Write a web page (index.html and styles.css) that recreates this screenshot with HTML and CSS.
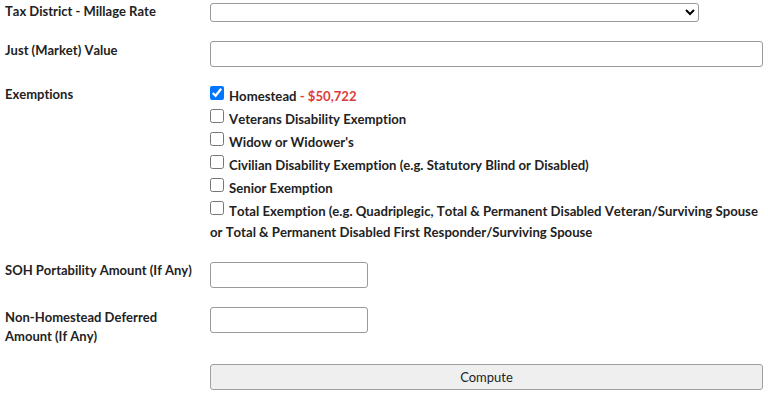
FILE: index.html
```html
<!DOCTYPE html>
<html lang="en">
<head>
<meta charset="utf-8">
<title>Tax Estimator</title>
<link rel="stylesheet" href="styles.css">
</head>
<body>
<form class="calc">
  <div class="row row-select">
    <label class="lbl" for="district">Tax District - Millage Rate</label>
    <div class="ctl"><select id="district" class="sel"><option></option></select></div>
  </div>
  <div class="row row-just">
    <label class="lbl" for="just">Just (Market) Value</label>
    <div class="ctl"><input id="just" class="txt full" type="text"></div>
  </div>
  <div class="row row-ex">
    <div class="lbl">Exemptions</div>
    <div class="ctl checks">
      <div class="chk"><input type="checkbox" checked><span>Homestead</span><span class="amt"> - $50,722</span></div>
      <div class="chk"><input type="checkbox"><span>Veterans Disability Exemption</span></div>
      <div class="chk"><input type="checkbox"><span>Widow or Widower's</span></div>
      <div class="chk"><input type="checkbox"><span>Civilian Disability Exemption (e.g. Statutory Blind or Disabled)</span></div>
      <div class="chk"><input type="checkbox"><span>Senior Exemption</span></div>
      <div class="chk"><input type="checkbox"><span>Total Exemption (e.g. Quadriplegic, Total &amp; Permanent Disabled Veteran/Surviving Spouse or Total &amp; Permanent Disabled First Responder/Surviving Spouse</span></div>
    </div>
  </div>
  <div class="row">
    <label class="lbl" for="soh">SOH Portability Amount (If Any)</label>
    <div class="ctl"><input id="soh" class="txt short" type="text"></div>
  </div>
  <div class="row row-two">
    <label class="lbl lbl-two" for="nhd">Non-Homestead Deferred Amount (If Any)</label>
    <div class="ctl"><input id="nhd" class="txt short" type="text"></div>
  </div>
  <div class="row row-btn">
    <div class="lbl"></div>
    <div class="ctl"><button type="button" class="btn">Compute</button></div>
  </div>
</form>
</body>
</html>
```

FILE: styles.css
```css
html, body {
  margin: 0;
  padding: 0;
  background: #ffffff;
}
body {
  font-family: Lato, "Noto Sans", sans-serif;
  font-size: 13px;
  color: #222222;
  font-variant-ligatures: none;
  font-kerning: none;
}
.calc {
  padding: 3px 5px 0 5px;
  display: flex;
  flex-direction: column;
  gap: 19px;
}
.row {
  display: grid;
  grid-template-columns: 205px 1fr;
  align-items: start;
}
.lbl {
  font-weight: 700;
  line-height: 16px;
  padding-top: 0;
}
.row-just .lbl { padding-top: 1px; }
.lbl-two {
  line-height: 19px;
  padding-top: 1px;
  width: 170px;
}
.ctl { min-width: 0; }
.sel {
  display: block;
  box-sizing: border-box;
  width: 489px;
  height: 19px;
  margin: 0;
  font-family: Lato, sans-serif;
  font-size: 13px;
  border: 1px solid #9a9a9a;
  border-radius: 3px;
  background: #fff;
}
.txt {
  display: block;
  box-sizing: border-box;
  height: 26px;
  margin: 0;
  border: 1px solid #9a9a9a;
  border-radius: 3px;
  background: #fff;
  font-family: Lato, sans-serif;
  font-size: 13px;
  padding: 2px 6px;
}
.full { width: 553px; }
.short { width: 158px; }
.checks {
  display: flex;
  flex-direction: column;
  gap: 2px;
  font-weight: 700;
  font-size: 13.15px;
  line-height: 21px;
}
.chk input {
  margin: 0 5px 0 0;
  width: 14px;
  height: 14px;
  vertical-align: 1px;
}
.amt { color: #e03c3c; }
.row-btn { margin-top: -1px; }
.btn {
  display: block;
  width: 553px;
  height: 26px;
  box-sizing: border-box;
  background: #efefef;
  border: 1px solid #a0a0a0;
  border-radius: 3px;
  font-family: Lato, sans-serif;
  font-size: 13px;
  color: #222;
  padding: 0;
}
```
